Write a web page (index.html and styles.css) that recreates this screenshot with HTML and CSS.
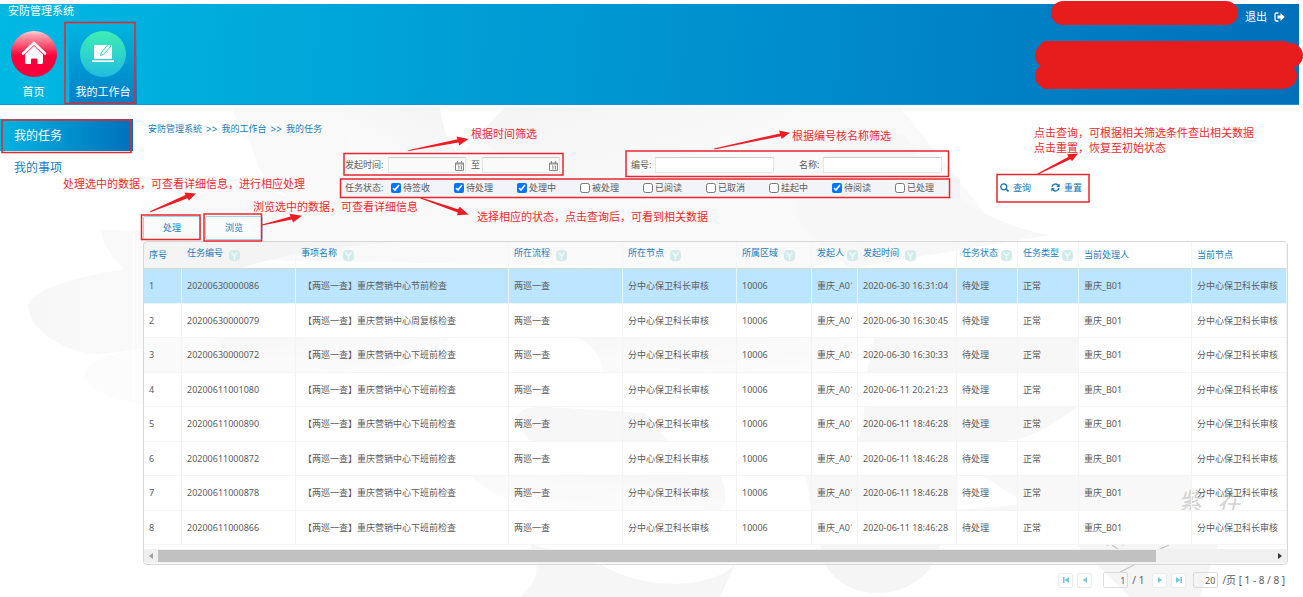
FILE: index.html
```html
<!DOCTYPE html>
<html lang="zh-CN">
<head>
<meta charset="utf-8">
<title>安防管理系统</title>
<link rel="stylesheet" href="styles.css">
</head>
<body>
<svg class="backdrop" viewBox="0 0 1303 597" aria-hidden="true">
  <defs>
    <linearGradient id="petal" x1="0" y1="0" x2="1" y2="1"><stop offset="0" stop-color="#f4f4f4"/><stop offset="1" stop-color="#fcfcfc"/></linearGradient>
    <linearGradient id="petal2" x1="1" y1="0" x2="0" y2="1"><stop offset="0" stop-color="#f3f3f3"/><stop offset="1" stop-color="#fdfdfd"/></linearGradient>
    <linearGradient id="leaf" x1="0" y1="0" x2="1" y2="0"><stop offset="0" stop-color="#f7f7f7"/><stop offset="1" stop-color="#fafafa"/></linearGradient>
  </defs>
  <path fill="#f9f9f9" d="M232 107C236 124 248 132 256 160C262 178 276 190 290 198C250 178 190 190 141 215V250L260 260L800 270C900 250 960 210 1000 232L900 107Z"/>
  <path fill="url(#petal)" d="M450 107H800C760 130 700 190 610 215C560 190 490 160 450 107Z"/>
  <path fill="url(#petal2)" d="M340 107H440C445 140 452 150 465 155C440 150 400 145 370 180C350 150 340 130 340 107Z"/>
  <path fill="#f7f7f7" d="M795 205C815 150 860 120 905 135C920 160 960 220 1050 235L850 268C820 245 795 225 795 205Z"/>
  <path fill="#fff" d="M440 107H505L460 155C445 140 442 120 440 107Z"/>
  <path fill="url(#leaf)" d="M100 230C106 250 115 262 125 269C80 276 28 290 28 307C30 330 65 354 100 354C115 353 130 350 143 348V230Z"/>
  <path fill="#fcfcfc" d="M143 350C110 352 85 362 85 376C88 390 110 402 143 404Z"/>
  <path fill="#f4f4f4" d="M143 242H400C340 246 290 252 242 268H143Z"/>
  <path fill="#f9f9f9" d="M143 337H230C240 355 255 366 270 372H143Z"/>
  <path fill="url(#petal)" d="M218 338H450C430 360 400 372 340 372H270C240 372 225 355 218 338Z"/>
  <path fill="url(#petal)" d="M525 337H860L835 372H604C600 355 590 342 575 337Z"/>
  <path fill="#f4f4f4" d="M875 337H1079V372H867Z"/>
  <path fill="#f4f4f4" d="M515 420C520 405 535 407 550 407L645 413L668 441H530Z"/>
  <path fill="#f4f4f4" d="M865 406H1079C1050 425 1030 441 1000 441H858Z"/>
  <path fill="url(#petal2)" d="M470 475H720C727 490 727 500 722 510H530C500 500 480 485 470 475Z"/>
  <path fill="#f6f6f6" d="M805 475H1192V510H812Z"/>
  <path fill="#fff" d="M957 475H982L1026 504L957 510Z"/>
  <path fill="#f6f6f6" d="M530 544L600 564C640 590 710 590 735 565L720 597H520C540 580 540 565 530 544Z"/>
  <path fill="#f5f5f5" d="M820 544H940C930 600 850 610 825 564Z"/>
  <path fill="#f5f5f5" d="M1076 544H1218L1200 597H1130Z"/>
  <path stroke="#fff" d="M133.500 106V440"/>
  <g class="watermark"><text x="1178" y="510">紫</text><text x="1217" y="512">在</text></g>
  <path stroke="#c4c4c4" fill="none" stroke-width="1.200" d="M1106 545H1109M1112 545L1119 550M1122 545H1124M1158 550L1169 545M1120 572L1136 564"/>
</svg>

<div class="page">
  <header class="topbar">
    <div>
      <h1 class="brand">安防管理系统</h1>
      <nav class="tabs" aria-label="主导航">
        <a class="tab tab-home" href="#home">
          <svg class="disc" viewBox="0 0 46 46" aria-hidden="true">
            <defs><linearGradient id="red" x1="0" y1="0" x2="0" y2="1"><stop offset="0" stop-color="#ffd3da"/><stop offset=".1" stop-color="#ff9dac"/><stop offset=".48" stop-color="#fb1745"/><stop offset=".55" stop-color="#fa003b"/></linearGradient></defs>
            <circle cx="23" cy="23" r="23" fill="url(#red)"/>
            <path d="M12 22.500L23 12L34 22.500" fill="none" stroke="#fff" stroke-width="2.600" stroke-linecap="round"/>
            <path fill="#fff" d="M23 15L32 23.500V31.500Q32 33 30.500 33H26.500V28.500Q26.500 27.500 25.500 27.500H21Q20 27.500 20 28.500V33H15.500Q14 33 14 31.500V23.500Z"/>
          </svg>
          <span>首页</span>
        </a>
        <a class="tab tab-work" href="#work" aria-current="page">
          <svg class="disc" viewBox="0 0 46 46" aria-hidden="true">
            <defs><linearGradient id="green" x1="0" y1="0" x2="0" y2="1"><stop offset="0" stop-color="#3deeb4"/><stop offset="1" stop-color="#22bce0"/></linearGradient></defs>
            <circle cx="23" cy="23" r="23" fill="url(#green)"/>
            <rect x="14" y="14" width="18" height="14" rx="1" fill="#fff"/>
            <path fill="#fff" d="M12 29.300H34V31H12Z"/>
            <path d="M20.500 24.500L21.300 21.500L28.500 13L31 15L23.500 23.500Z" fill="#fff" stroke="#2fd3cb"/>
          </svg>
          <span>我的工作台</span>
        </a>
      </nav>
    </div>
    <a class="logout" href="#logout">退出
      <svg width="11" height="10" viewBox="0 0 11 10" aria-hidden="true"><path d="M4.500 1H2.500Q1 1 1 2.500V7.500Q1 9 2.500 9H4.500" fill="none" stroke="#fff" stroke-width="1.300"/><path fill="#fff" d="M3.500 3.500H6.500V1L10.800 5L6.500 9V6.500H3.500Z"/></svg>
    </a>
  </header>

  <div class="body">
    <nav class="side" aria-label="侧栏">
      <a class="side-item active" href="#tasks">我的任务</a>
      <a class="side-item" href="#items">我的事项</a>
    </nav>

    <main class="main">
      <p class="crumbs"><a href="#root">安防管理系统</a><span>&gt;&gt;</span><a href="#work">我的工作台</a><span>&gt;&gt;</span><a href="#tasks">我的任务</a></p>

      <form class="filter">
        <div class="criteria">
          <div class="row fields">
            <label class="wide" for="from">发起时间:</label>
            <span class="date"><input id="from" type="text"><svg viewBox="0 0 9 10" aria-hidden="true"><path d="M.5 2H8.500V9.500H.5ZM2.500 0V3M6.500 0V3M.5 3H8.500M3 5H4V8.500M5.500 5H6.500V8.500" fill="none" stroke="#888"/></svg></span>
            <label class="to" for="until">至</label>
            <span class="date"><input id="until" type="text"><svg viewBox="0 0 9 10" aria-hidden="true"><path d="M.5 2H8.500V9.500H.5ZM2.500 0V3M6.500 0V3M.5 3H8.500M3 5H4V8.500M5.500 5H6.500V8.500" fill="none" stroke="#888"/></svg></span>
            <label class="short first" for="code">编号:</label>
            <input class="box" id="code" type="text">
            <label class="short second" for="name">名称:</label>
            <input class="box" id="name" type="text">
          </div>
          <div class="row states">
            <span class="wide">任务状态:</span>
            <label><input type="checkbox" checked>待签收</label>
            <label><input type="checkbox" checked>待处理</label>
            <label><input type="checkbox" checked>处理中</label>
            <label><input type="checkbox">被处理</label>
            <label><input type="checkbox">已阅读</label>
            <label><input type="checkbox">已取消</label>
            <label><input type="checkbox">挂起中</label>
            <label><input type="checkbox" checked>待阅读</label>
            <label><input type="checkbox">已处理</label>
          </div>
        </div>
        <div class="actions">
          <button type="button"><svg width="9" height="9" viewBox="0 0 9 9" aria-hidden="true"><path d="M6 6L8.500 8.500" stroke="#0f75bb" stroke-width="1.600"/><circle cx="3.800" cy="3.800" r="3" fill="none" stroke="#0f75bb" stroke-width="1.300"/></svg>查询</button>
          <button type="reset"><svg width="9" height="9" viewBox="0 0 9 9" aria-hidden="true"><path d="M1 3.800A3.500 3.500 0 0 1 7.300 2.500M8 5.200A3.500 3.500 0 0 1 1.700 6.500" fill="none" stroke="#0f75bb" stroke-width="1.400"/><path fill="#0f75bb" d="M8.700 .5V4H5.200ZM.3 8.500V5H3.800Z"/></svg>重置</button>
        </div>
      </form>

      <div class="tools">
        <button type="button">处理</button>
        <button type="button">浏览</button>
      </div>

      <svg class="symbols" aria-hidden="true"><symbol id="funnel" viewBox="0 0 11 11"><rect width="11" height="11" rx="4" fill="#d3eaeb"/><path d="M2.500 2.500L5.500 6L8.500 2.500M5.500 6V10" fill="none" stroke="#f0f8f8" stroke-width="1.500"/></symbol></svg>
      <section class="grid">
        <table>
          <colgroup><col class="c38"><col class="c114"><col class="c213"><col class="c114"><col class="c114"><col class="c75"><col class="c46"><col class="c99"><col class="c61"><col class="c61"><col class="c113"><col></colgroup>
          <thead><tr>
            <th>序号</th>
            <th class="sortable">任务编号<svg><use href="#funnel"/></svg></th>
            <th class="sortable">事项名称<svg><use href="#funnel"/></svg></th>
            <th class="sortable">所在流程<svg><use href="#funnel"/></svg></th>
            <th class="sortable">所在节点<svg><use href="#funnel"/></svg></th>
            <th class="sortable">所属区域<svg><use href="#funnel"/></svg></th>
            <th class="sortable tight">发起人<svg><use href="#funnel"/></svg></th>
            <th class="sortable">发起时间<svg><use href="#funnel"/></svg></th>
            <th class="sortable tight">任务状态<svg><use href="#funnel"/></svg></th>
            <th class="sortable tight">任务类型<svg><use href="#funnel"/></svg></th>
            <th>当前处理人</th>
            <th>当前节点</th>
          </tr></thead>
          <tbody>
            <tr class="selected"><td>1</td><td>20200630000086</td><td class="title">【两巡一查】重庆营销中心节前检查</td><td>两巡一查</td><td>分中心保卫科长审核</td><td>10006</td><td><span class="clip">重庆_A01</span></td><td>2020-06-30 16:31:04</td><td>待处理</td><td>正常</td><td>重庆_B01</td><td>分中心保卫科长审核</td></tr>
            <tr><td>2</td><td>20200630000079</td><td class="title">【两巡一查】重庆营销中心周复核检查</td><td>两巡一查</td><td>分中心保卫科长审核</td><td>10006</td><td><span class="clip">重庆_A01</span></td><td>2020-06-30 16:30:45</td><td>待处理</td><td>正常</td><td>重庆_B01</td><td>分中心保卫科长审核</td></tr>
            <tr><td>3</td><td>20200630000072</td><td class="title">【两巡一查】重庆营销中心下班前检查</td><td>两巡一查</td><td>分中心保卫科长审核</td><td>10006</td><td><span class="clip">重庆_A01</span></td><td>2020-06-30 16:30:33</td><td>待处理</td><td>正常</td><td>重庆_B01</td><td>分中心保卫科长审核</td></tr>
            <tr><td>4</td><td>20200611001080</td><td class="title">【两巡一查】重庆营销中心下班前检查</td><td>两巡一查</td><td>分中心保卫科长审核</td><td>10006</td><td><span class="clip">重庆_A01</span></td><td>2020-06-11 20:21:23</td><td>待处理</td><td>正常</td><td>重庆_B01</td><td>分中心保卫科长审核</td></tr>
            <tr><td>5</td><td>20200611000890</td><td class="title">【两巡一查】重庆营销中心下班前检查</td><td>两巡一查</td><td>分中心保卫科长审核</td><td>10006</td><td><span class="clip">重庆_A01</span></td><td>2020-06-11 18:46:28</td><td>待处理</td><td>正常</td><td>重庆_B01</td><td>分中心保卫科长审核</td></tr>
            <tr><td>6</td><td>20200611000872</td><td class="title">【两巡一查】重庆营销中心下班前检查</td><td>两巡一查</td><td>分中心保卫科长审核</td><td>10006</td><td><span class="clip">重庆_A01</span></td><td>2020-06-11 18:46:28</td><td>待处理</td><td>正常</td><td>重庆_B01</td><td>分中心保卫科长审核</td></tr>
            <tr><td>7</td><td>20200611000878</td><td class="title">【两巡一查】重庆营销中心下班前检查</td><td>两巡一查</td><td>分中心保卫科长审核</td><td>10006</td><td><span class="clip">重庆_A01</span></td><td>2020-06-11 18:46:28</td><td>待处理</td><td>正常</td><td>重庆_B01</td><td>分中心保卫科长审核</td></tr>
            <tr><td>8</td><td>20200611000866</td><td class="title">【两巡一查】重庆营销中心下班前检查</td><td>两巡一查</td><td>分中心保卫科长审核</td><td>10006</td><td><span class="clip">重庆_A01</span></td><td>2020-06-11 18:46:28</td><td>待处理</td><td>正常</td><td>重庆_B01</td><td>分中心保卫科长审核</td></tr>
          </tbody>
        </table>
        <div class="scrollbar" aria-hidden="true">
          <svg viewBox="0 0 14 14"><path fill="#a0a0a0" d="M9 4V10L5 7Z"/></svg>
          <div class="track"><div class="thumb"></div></div>
          <svg viewBox="0 0 14 14"><path fill="#333" d="M5 4V10L9 7Z"/></svg>
        </div>
      </section>

      <div class="pager">
        <button type="button" aria-label="首页"><svg viewBox="0 0 8 8"><path fill="#7cc3dd" d="M1 1H2.500V7H1ZM7 1V7L2.500 4Z"/></svg></button>
        <button type="button" aria-label="上一页"><svg viewBox="0 0 8 8"><path fill="#7cc3dd" d="M6 1V7L2 4Z"/></svg></button>
        <input class="current" type="text" value="1" aria-label="页码"><span class="total">/ 1</span>
        <button type="button" aria-label="下一页"><svg viewBox="0 0 8 8"><path fill="#7cc3dd" d="M2 1V7L6 4Z"/></svg></button>
        <button type="button" aria-label="末页"><svg viewBox="0 0 8 8"><path fill="#7cc3dd" d="M5.500 1H7V7H5.500ZM1 1V7L5.500 4Z"/></svg></button>
        <input class="size" type="text" value="20" aria-label="每页条数"><span>/页 [ 1 - 8 / 8 ]</span>
      </div>
    </main>
  </div>
</div>

<svg class="redaction" viewBox="0 0 268 92" aria-hidden="true">
  <g fill="#e71d1d"><rect x="16" y="1" width="187" height="24" rx="12"/><rect x="0" y="43" width="268" height="25" rx="12.500"/><rect x="0" y="64" width="262" height="24" rx="12"/><rect x="5" y="41" width="250" height="48" rx="6"/></g>
</svg>

<div class="notes">
  <svg viewBox="0 0 1303 597" aria-hidden="true">
    <g fill="none" stroke="#e8272c" stroke-width="1.500">
      <rect x="65" y="22.500" width="70" height="81"/>
      <rect x="2" y="120" width="129" height="32.500"/>
      <rect x="344" y="153.500" width="219" height="21.500"/>
      <rect x="340.500" y="179" width="609" height="18.500"/>
      <rect x="626" y="151" width="322.500" height="25.500"/>
      <rect x="997" y="174.500" width="92" height="27.500"/>
      <rect x="141.500" y="215" width="58.500" height="24.500"/>
      <rect x="204" y="214" width="57.500" height="27"/>
    </g>
    <g fill="#ee1c24">
      <path d="M408 150.300L457.500 139.300L456.500 136.500L468.500 139L459 145.500L458.700 142.600L408.500 151Z"/>
      <path d="M421 197.500L458 209.200L459.800 206.700L468.500 214.500L457 215.300L457.700 212.600L420.500 198.500Z"/>
      <path d="M714 148.500L780 133.400L779 130.500L790 132.800L781.500 139L781 136.200L714.500 149.500Z"/>
      <path d="M1037.500 173.500L1068.500 156.800L1067 154.300L1078 153.500L1072 161.300L1070.500 159.300L1038.500 174.300Z"/>
      <path d="M150 211.300L185.500 195L184.500 192.500L196 193.500L189 200.500L187.500 198.300L150.500 212.300Z"/>
      <path d="M262 224.500L290.500 216.600L289.500 213.800L302 215.800L293 222.500L292 219.500L262 225.500Z"/>
    </g>
  </svg>
  <p class="n1">根据时间筛选</p>
  <p class="n2">根据编号核名称筛选</p>
  <p class="n3">点击查询，可根据相关筛选条件查出相关数据<br>点击重置，恢复至初始状态</p>
  <p class="n4">处理选中的数据，可查看详细信息，进行相应处理</p>
  <p class="n5">浏览选中的数据，可查看详细信息</p>
  <p class="n6">选择相应的状态，点击查询后，可看到相关数据</p>
</div>
</body>
</html>
```

FILE: styles.css
```css
* { box-sizing: border-box; }
body {
  margin: 0;
  position: relative;
  min-height: 100vh;
  background: #fff;
  color: #5c5c60;
  font: 9px/14px "Noto Sans", "Noto Sans CJK SC", sans-serif;
}
a { color: inherit; text-decoration: none; }
button, input { font: inherit; color: inherit; margin: 0; }
button { cursor: pointer; }

.backdrop { position: absolute; left: 0; top: 0; width: 1303px; height: 597px; z-index: -1; }
.watermark { font: italic 24px "Noto Sans CJK SC", sans-serif; fill: #c4c4c4; }
.symbols { display: none; }

.page { padding: 4px 4px 0 0; }

/* top bar */
.topbar {
  display: flex;
  justify-content: space-between;
  align-items: flex-start;
  color: #fff;
  background: linear-gradient(95deg, #00b8e2 0%, #00a6d9 25%, #008acb 65%, #006fba 100%);
  border-bottom: 1px solid #1890d6;
}
.brand { margin: 0; padding-left: 8px; font-size: 11px; line-height: 14px; font-weight: 400; }
.tabs { display: flex; margin-top: 4px; gap: 10px; padding-left: 8px; }
.tab {
  display: flex;
  flex-direction: column;
  align-items: center;
  gap: 4px;
  padding: 9px 0 1px;
  font-size: 11px;
  line-height: 22px;
}
.tab-home { width: 51px; }
.tab-work { width: 68px; background: linear-gradient(#00b6e0, #007fc6); }
.disc { width: 46px; height: 46px; }
.logout { display: flex; align-items: center; gap: 7px; padding: 5px 14px 0 0; font-size: 11px; line-height: 16px; }

/* columns */
.body { display: flex; gap: 10px; }
.side { width: 133px; padding-top: 14px; flex: none; }
.side-item { display: block; padding-left: 14px; font-size: 12px; line-height: 34px; color: #1a7dc0; }
.side-item.active { padding-top: 2px; color: #fff; line-height: 30px; background: linear-gradient(90deg, #00b4e1, #0070bb); }
.main { flex: 1; min-width: 0; padding: 14px 11px 0 0; }
.crumbs { display: flex; gap: 4px; margin: 0; padding-left: 5px; line-height: 20px; color: #1a7dc0; }
.crumbs span { font-size: 10px; }

/* filter form */
.filter { display: flex; gap: 40px; margin: 14px 0 0 198px; align-items: flex-end; }
.criteria { width: 619px; }
.row { display: flex; align-items: center; padding-left: 4px; }
.fields { height: 23px; margin-bottom: 2px; }
.wide { width: 43px; white-space: nowrap; }
.short { width: 24px; }
.first { margin-left: 71px; }
.second { margin-left: 25px; }
.to { width: 16px; padding-left: 5px; }
.date { position: relative; width: 78px; display: flex; }
.date input, .box { height: 16px; padding: 0 3px; border: 1px solid #e6e6e6; border-top-color: #ccc; background: #fff; }
.date input { width: 100%; background: #fafafa; }
.date svg { position: absolute; right: 2px; top: 4px; width: 9px; height: 10px; }
.box { width: 119px; }
.states { height: 19px; background: #f3f4f7; border-radius: 3px; }
.states label { width: 63px; display: flex; align-items: center; gap: 2px; padding-left: 3px; }
.states input { width: 10px; height: 10px; accent-color: #0075ff; }
.actions { display: flex; gap: 20px; }
.actions button { display: flex; align-items: center; gap: 4px; padding: 0; border: 0; background: none; color: #0f75bb; line-height: 19px; }

/* table tools */
.tools { display: flex; gap: 4px; margin: 19px 0 1px; }
.tools button { width: 58px; height: 24px; padding: 0; border: 1px solid #9fd3f1; border-radius: 2px; background: #fafbfc; color: #1a7dc0; }

/* data grid */
.grid { border: 1px solid #d8d8d8; border-radius: 4px; padding-bottom: 1px; }
table { width: 100%; table-layout: fixed; border-collapse: separate; border-spacing: 0; }
.c38 { width: 38px; }
.c46 { width: 46px; }
.c61 { width: 61px; }
.c75 { width: 75px; }
.c99 { width: 99px; }
.c113 { width: 113px; }
.c114 { width: 114px; }
.c213 { width: 213px; }
th, td { padding: 0 0 0 5px; text-align: left; white-space: nowrap; font-weight: 400; }
th { height: 27px; color: #1a7dc0; border-bottom: 1px solid #d8d8d8; border-right: 1px solid #f5f5f5; }
th.sortable { padding-bottom: 3px; }
th svg { width: 11px; height: 11px; margin-left: 6px; vertical-align: -5px; }
th.tight svg { margin-left: 3px; }
td { height: 35px; border-right: 1px solid #f3f5f5; border-bottom: 1px solid #f4f6f6; }
td.title { padding-left: 7px; }
tbody tr:nth-child(even) td { height: 34px; background: #fffffff4; }
tbody tr:nth-child(odd) td { background: #ffffff40; }
tbody tr.selected td { background: #bce5ff; border-color: #e7f5fd; }
.clip { display: block; width: 35px; overflow: hidden; }
.scrollbar { display: flex; height: 14px; margin-top: 4px; background: #f0f0f0; }
.scrollbar svg { width: 14px; height: 14px; }
.track { flex: 1; padding: 1px 0; }
.thumb { width: 89.5%; height: 12px; background: #c1c1c1; }

/* pager */
.pager { display: flex; justify-content: flex-end; align-items: center; gap: 4px; margin-top: 6px; height: 18px; padding-right: 3px; font-size: 10px; }
.pager button { width: 15px; height: 15px; padding: 0; display: grid; place-items: center; border: 1px solid #ececec; border-radius: 2px; background: #fafcfd; }
.pager button svg { width: 8px; height: 8px; }
.pager input { width: 25px; height: 16px; padding: 0 2px; font-size: 9px; text-align: right; border: 1px solid #ddd; border-radius: 2px; background: transparent; }
.pager .current { margin-left: 7px; }
.total { margin-right: 4px; }
.pager .size { margin-left: 3px; }

/* redaction marks and callouts lie over the page */
.redaction { position: absolute; right: 0; top: 0; width: 268px; height: 92px; }
.notes { position: absolute; left: 0; top: 0; width: 1303px; height: 597px; pointer-events: none; }
.notes svg { display: block; width: 100%; height: 100%; }
.notes p { position: absolute; margin: 0; font-size: 11px; line-height: 15px; color: #ee2a2f; white-space: nowrap; }
.n1 { left: 471px; top: 126px; }
.n2 { left: 792px; top: 128px; }
.n3 { left: 1034px; top: 125px; }
.n4 { left: 63px; top: 176px; }
.n5 { left: 253px; top: 199px; }
.n6 { left: 477px; top: 209px; }
```
